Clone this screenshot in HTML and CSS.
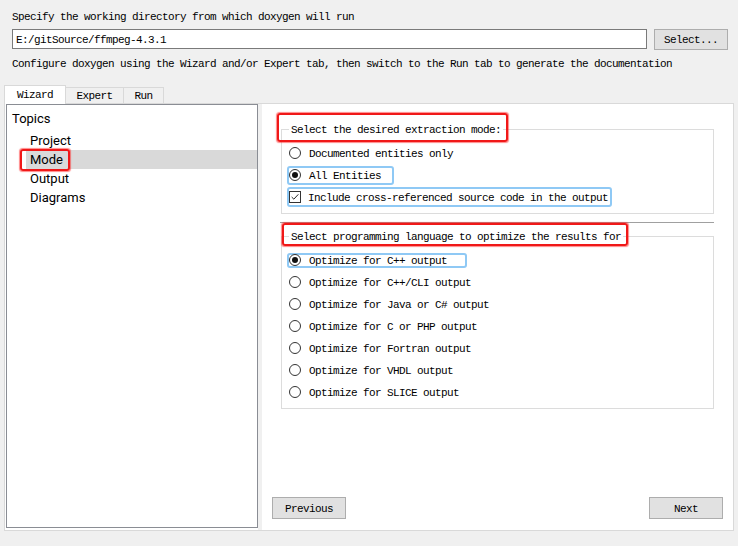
FILE: index.html
```html
<!DOCTYPE html>
<html>
<head>
<meta charset="utf-8">
<link rel="stylesheet" href="styles.css">
</head>
<body>
<div class="top mono">
  <div class="lbl l1">Specify the working directory from which doxygen will run</div>
  <div class="dirrow">
    <div class="input">E:/gitSource/ffmpeg-4.3.1</div>
    <div class="btn selbtn">Select...</div>
  </div>
  <div class="lbl l2">Configure doxygen using the Wizard and/or Expert tab, then switch to the Run tab to generate the documentation</div>
</div>
<div class="tabs mono">
  <div class="tab active">Wizard</div>
  <div class="tab t-exp">Expert</div>
  <div class="tab t-run">Run</div>
</div>
<div class="pane">
  <div class="tree">
    <div class="topics">Topics</div>
    <div class="item">Project</div>
    <div class="item selected">Mode<span class="annot a-mode"></span></div>
    <div class="item">Output</div>
    <div class="item">Diagrams</div>
  </div>
  <div class="splitter"></div>
  <div class="right mono">
    <fieldset class="group">
      <legend>Select the desired extraction mode:<span class="annot a-g1"></span></legend>
      <div class="opt"><span class="fb"><span class="radio"></span><span class="txt">Documented entities only</span></span></div>
      <div class="opt"><span class="fb focus f-all"><span class="radio on"></span><span class="txt">All Entities</span></span></div>
      <div class="opt"><span class="fb focus f-inc"><span class="check"><svg width="12" height="12" viewBox="0 0 12 12"><polyline points="2,6 4.6,8.6 10,2.8" fill="none" stroke="#222" stroke-width="1.2"/></svg></span><span class="txt">Include cross-referenced source code in the output</span></span></div>
    </fieldset>
    <div class="sep"></div>
    <fieldset class="group">
      <legend>Select programming language to optimize the results for<span class="annot a-g2"></span></legend>
      <div class="opt"><span class="fb focus f-cpp"><span class="radio on"></span><span class="txt">Optimize for C++ output</span></span></div>
      <div class="opt"><span class="fb"><span class="radio"></span><span class="txt">Optimize for C++/CLI output</span></span></div>
      <div class="opt"><span class="fb"><span class="radio"></span><span class="txt">Optimize for Java or C# output</span></span></div>
      <div class="opt"><span class="fb"><span class="radio"></span><span class="txt">Optimize for C or PHP output</span></span></div>
      <div class="opt"><span class="fb"><span class="radio"></span><span class="txt">Optimize for Fortran output</span></span></div>
      <div class="opt"><span class="fb"><span class="radio"></span><span class="txt">Optimize for VHDL output</span></span></div>
      <div class="opt"><span class="fb"><span class="radio"></span><span class="txt">Optimize for SLICE output</span></span></div>
    </fieldset>
    <div class="spacer"></div>
    <div class="nav">
      <div class="btn navbtn">Previous</div>
      <div class="btn navbtn">Next</div>
    </div>
  </div>
</div>
</body>
</html>
```
FILE: styles.css
```css
* { box-sizing: border-box; }
html, body { margin: 0; padding: 0; }
body {
  background: #f0f0f0;
  width: 738px;
  height: 546px;
  overflow: hidden;
  color: #000;
}
.mono {
  font-family: "Liberation Mono", monospace;
  font-size: 11px;
  letter-spacing: -0.6px;
}
.top { padding-left: 12px; }
.lbl { height: 12px; line-height: 12px; white-space: nowrap; }
.l1 { padding-top: 11px; height: 23px; }
.dirrow { display: flex; margin-top: 6px; height: 21px; }
.input {
  width: 635px;
  height: 20px;
  border: 1px solid #7a7a7a;
  background: #fff;
  padding-left: 3px;
  padding-top: 1px;
  line-height: 18px;
}
.btn {
  background: #e1e1e1;
  border: 1px solid #adadad;
  text-align: center;
}
.selbtn {
  margin-left: 7px;
  width: 74px;
  height: 21px;
  line-height: 19px;
  padding-top: 1px;
}
.l2 { margin-top: 8px; }

.tabs {
  display: flex;
  align-items: flex-end;
  margin-top: 15px;
  margin-left: 4px;
  height: 18px;
}
.tab {
  height: 16px;
  line-height: 15px;
  padding-top: 1px;
  text-align: center;
  background: #f0f0f0;
  border-top: 1px solid #d9d9d9;
  border-right: 1px solid #d9d9d9;
}
.tab.active {
  position: relative;
  z-index: 1;
  width: 62px;
  height: 19px;
  line-height: 17px;
  margin-bottom: -1px;
  background: #fff;
  border-left: 1px solid #d9d9d9;
}
.t-exp { width: 58px; }
.t-run { width: 40px; }

.pane {
  display: flex;
  margin-left: 4px;
  width: 730px;
  height: 428px;
  border: 1px solid #d9d9d9;
  background: #fff;
}
.tree {
  margin-left: 1px;
  width: 252px;
  height: 424px;
  border: 1px solid #8a8d94;
  background: #fff;
  padding-top: 4px;
  font-family: Roboto, "Noto Sans", sans-serif;
  font-size: 13px;
}
.topics {
  padding-left: 5px;
  line-height: 19px;
  height: 19px;
  margin-bottom: 3px;
}
.item {
  position: relative;
  margin-left: 19px;
  padding-left: 4px;
  height: 19px;
  line-height: 19px;
}
.item.selected { background: #d9d9d9; }
.splitter {
  width: 4px;
  background: #f0f0f0;
}
.right {
  flex: 1;
  display: flex;
  flex-direction: column;
}
.group {
  margin: 19px 19px 0 19px;
  padding: 0 0 5px 0;
  min-width: 0;
  border: 1px solid #dcdcdc;
}
.group + .sep + .group { margin-top: 7px; }
legend {
  position: relative;
  margin-left: 7px;
  padding: 1px 2px 0 2px;
  line-height: 12px;
  height: 13px;
  white-space: nowrap;
}
.group > .opt:first-of-type { margin-top: 6px; }
.opt {
  display: flex;
  align-items: center;
  height: 22px;
  padding-left: 5px;
  white-space: nowrap;
}
.fb {
  display: inline-flex;
  align-items: center;
  height: 19px;
  border: 2px solid transparent;
  border-radius: 3px;
}
.fb.focus { border-color: #8fc9f5; }
.f-all { width: 107px; }
.f-inc { width: 325px; height: 20px; }
.f-cpp { width: 180px; height: 15px; }
.radio {
  width: 12px;
  height: 12px;
  border: 1px solid #333;
  border-radius: 50%;
  background: #fff;
  display: flex;
  align-items: center;
  justify-content: center;
  margin-right: 8px;
  flex: none;
}
.radio.on::after {
  content: "";
  width: 6px;
  height: 6px;
  border-radius: 50%;
  background: #111;
}
.check {
  width: 12px;
  height: 12px;
  border: 1px solid #333;
  background: #fff;
  margin-right: 7px;
  flex: none;
  display: flex;
  align-items: center;
  justify-content: center;
}
.check svg { display: block; }
.txt { line-height: 12px; padding-top: 1px; }
.sep {
  margin: 8px 19px 0 18px;
  height: 1px;
  background: #a0a0a0;
}
.spacer { flex: 1; }
.nav {
  display: flex;
  justify-content: space-between;
  padding: 0 10px 11px 10px;
}
.navbtn {
  width: 74px;
  height: 22px;
  line-height: 20px;
  padding-top: 1px;
}
.annot {
  position: absolute;
  border: 2px solid #f01818;
  border-radius: 3px;
  box-shadow: 0 0 1px 0.5px rgba(255, 40, 40, 0.55);
  pointer-events: none;
}
.a-mode { left: -6px; top: -1px; width: 50px; height: 22px; }
.a-g1 { left: -12px; top: -10px; width: 231px; height: 29px; }
.a-g2 { left: -7px; top: -7px; width: 346px; height: 23px; }
```
